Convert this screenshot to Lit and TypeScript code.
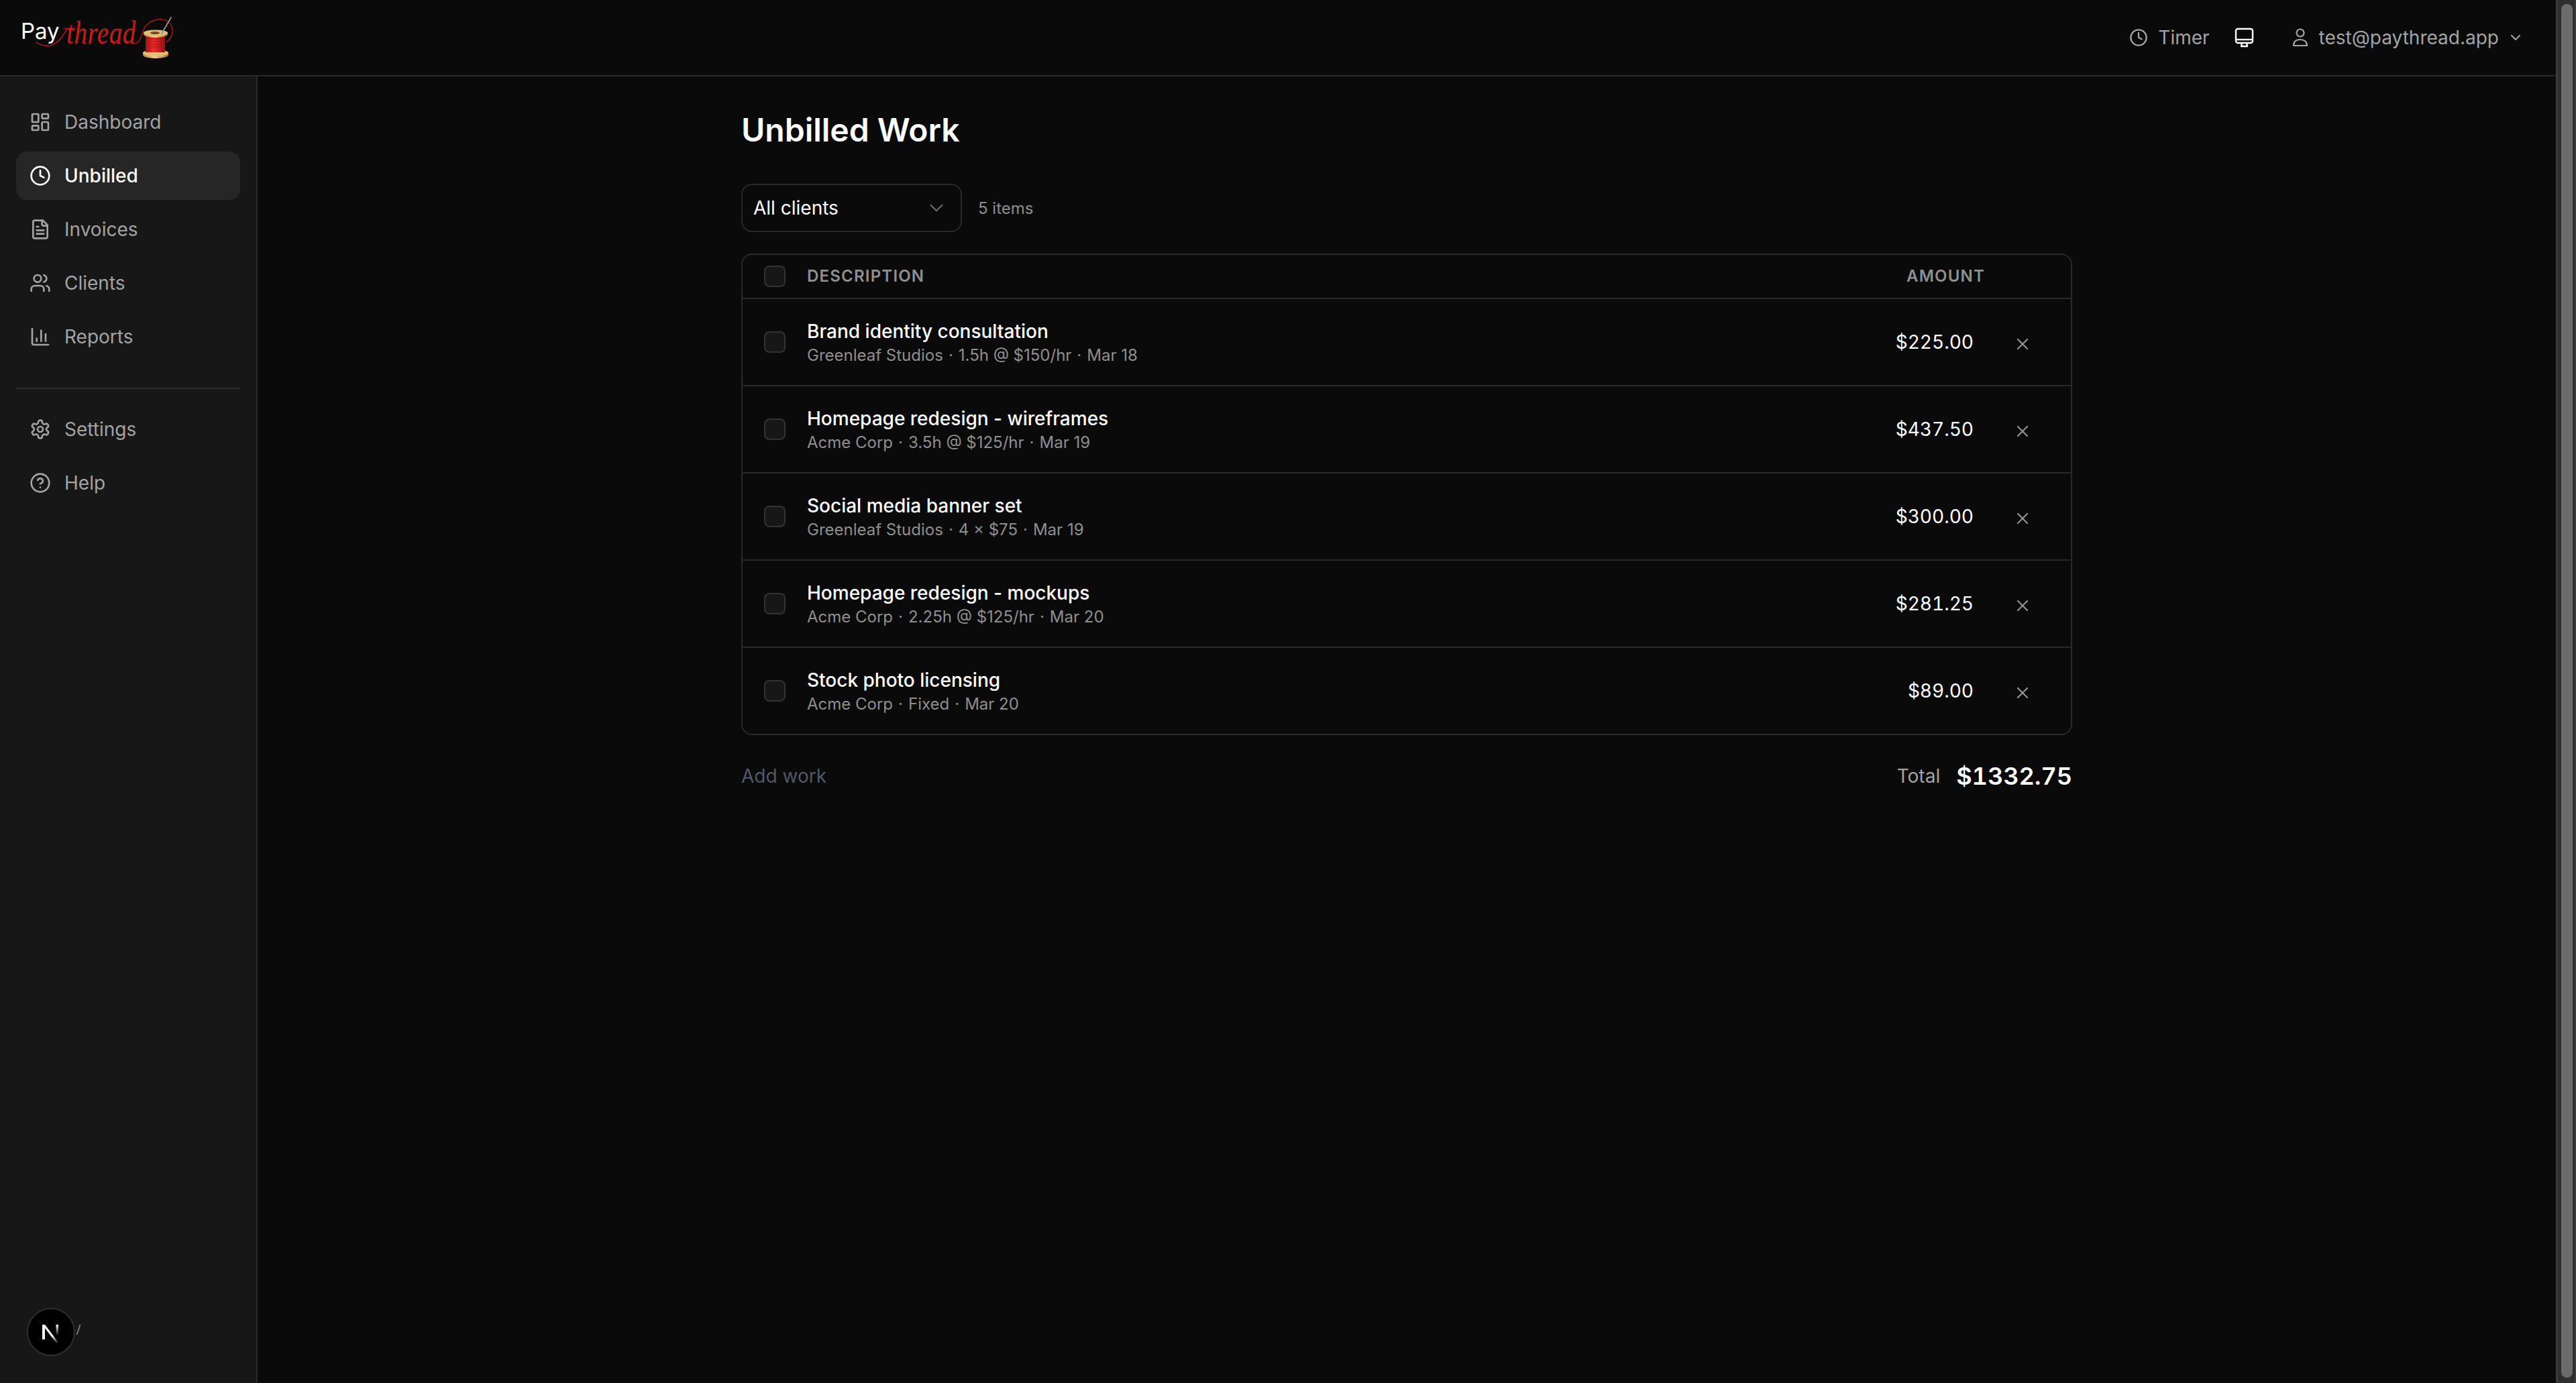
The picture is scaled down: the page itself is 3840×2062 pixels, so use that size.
import { LitElement, html, css, svg } from "lit";
import { customElement } from "lit/decorators.js";

const ic = (body: unknown, cls = "ic") => html`<svg class=${cls} viewBox="0 0 24 24" fill="none" stroke="currentColor" stroke-width="2" stroke-linecap="round" stroke-linejoin="round">${body}</svg>`;

const icons = {
  dashboard: svg`<rect width="7" height="9" x="3" y="3" rx="1"/><rect width="7" height="5" x="14" y="3" rx="1"/><rect width="7" height="9" x="14" y="12" rx="1"/><rect width="7" height="5" x="3" y="16" rx="1"/>`,
  clock: svg`<circle cx="12" cy="12" r="10"/><polyline points="12 6 12 12 16 14"/>`,
  file: svg`<path d="M15 2H6a2 2 0 0 0-2 2v16a2 2 0 0 0 2 2h12a2 2 0 0 0 2-2V7Z"/><path d="M14 2v4a2 2 0 0 0 2 2h4"/><path d="M10 9H8"/><path d="M16 13H8"/><path d="M16 17H8"/>`,
  users: svg`<path d="M16 21v-2a4 4 0 0 0-4-4H6a4 4 0 0 0-4 4v2"/><circle cx="9" cy="7" r="4"/><path d="M22 21v-2a4 4 0 0 0-3-3.87"/><path d="M16 3.13a4 4 0 0 1 0 7.75"/>`,
  chart: svg`<path d="M3 3v16a2 2 0 0 0 2 2h16"/><path d="M18 17V9"/><path d="M13 17V5"/><path d="M8 17v-3"/>`,
  settings: svg`<path d="M12.22 2h-.44a2 2 0 0 0-2 2v.18a2 2 0 0 1-1 1.73l-.43.25a2 2 0 0 1-2 0l-.15-.08a2 2 0 0 0-2.73.73l-.22.38a2 2 0 0 0 .73 2.73l.15.1a2 2 0 0 1 1 1.72v.51a2 2 0 0 1-1 1.74l-.15.09a2 2 0 0 0-.73 2.73l.22.38a2 2 0 0 0 2.73.73l.15-.08a2 2 0 0 1 2 0l.43.25a2 2 0 0 1 1 1.73V20a2 2 0 0 0 2 2h.44a2 2 0 0 0 2-2v-.18a2 2 0 0 1 1-1.73l.43-.25a2 2 0 0 1 2 0l.15.08a2 2 0 0 0 2.73-.73l.22-.39a2 2 0 0 0-.73-2.73l-.15-.08a2 2 0 0 1-1-1.74v-.5a2 2 0 0 1 1-1.74l.15-.09a2 2 0 0 0 .73-2.73l-.22-.38a2 2 0 0 0-2.73-.73l-.15.08a2 2 0 0 1-2 0l-.43-.25a2 2 0 0 1-1-1.73V4a2 2 0 0 0-2-2z"/><circle cx="12" cy="12" r="3"/>`,
  help: svg`<circle cx="12" cy="12" r="10"/><path d="M9.09 9a3 3 0 0 1 5.83 1c0 2-3 3-3 3"/><path d="M12 17h.01"/>`,
  x: svg`<path d="M18 6 6 18"/><path d="m6 6 12 12"/>`,
  chevron: svg`<path d="m6 9 6 6 6-6"/>`,
};

const nav = [
  { label: "Dashboard", icon: icons.dashboard },
  { label: "Unbilled", icon: icons.clock, active: true },
  { label: "Invoices", icon: icons.file },
  { label: "Clients", icon: icons.users },
  { label: "Reports", icon: icons.chart },
];
const nav2 = [
  { label: "Settings", icon: icons.settings },
  { label: "Help", icon: icons.help },
];
const rows: [string, string[], string][] = [
  ["Brand identity consultation", ["Greenleaf Studios", "1.5h @ $150/hr", "Mar 18"], "$225.00"],
  ["Homepage redesign - wireframes", ["Acme Corp", "3.5h @ $125/hr", "Mar 19"], "$437.50"],
  ["Social media banner set", ["Greenleaf Studios", "4 × $75", "Mar 19"], "$300.00"],
  ["Homepage redesign - mockups", ["Acme Corp", "2.25h @ $125/hr", "Mar 20"], "$281.25"],
  ["Stock photo licensing", ["Acme Corp", "Fixed", "Mar 20"], "$89.00"],
];

const logo = html`<svg class="logo" viewBox="0 0 264 100" width="264" height="100">
  <defs>
    <linearGradient id="wood" x1="0" x2="1" y1="0" y2="0">
      <stop offset="0" stop-color="#b98338"/><stop offset=".45" stop-color="#f3d08e"/><stop offset="1" stop-color="#a8742f"/>
    </linearGradient>
    <linearGradient id="spool" x1="0" x2="1" y1="0" y2="0">
      <stop offset="0" stop-color="#a81212"/><stop offset=".4" stop-color="#ec2b2b"/><stop offset="1" stop-color="#9c0f0f"/>
    </linearGradient>
  </defs>
  <text x="31" y="58" class="pay">Pay</text>
  <g transform="translate(99 65) scale(1 1.25)"><text x="0" y="0" class="thread">thread</text></g>
  <path d="M53 63 C62 68 72 70 80 66 C90 61 94 52 100 43" fill="none" stroke="#d01818" stroke-width="1.3"/>
  <path d="M94 43 L113 42" fill="none" stroke="#d01818" stroke-width="1.2"/>
  <path d="M200 65 C208 66 211 52 214 44 C219 33 232 27 243 29 C258 32 263 50 248 63" fill="none" stroke="#c81616" stroke-width="1.2"/>
  <rect x="217" y="54" width="29" height="24" fill="url(#spool)"/>
  <g stroke="#8a0e0e" stroke-width=".7" opacity=".7">
    <path d="M217 58h29M217 62h29M217 66h29M217 70h29M217 74h29"/>
  </g>
  <path d="M213 79a19 5 0 0 1 38 0v3a19 5 0 0 1-38 0z" fill="url(#wood)"/>
  <ellipse cx="232" cy="79" rx="19" ry="4.5" fill="#e6bd77"/>
  <rect x="217" y="72" width="29" height="6" fill="url(#spool)"/>
  <path d="M214 49v2a18 5 0 0 0 36 0v-2z" fill="url(#wood)"/>
  <ellipse cx="232" cy="49" rx="18" ry="4.5" fill="#e6bd77"/>
  <ellipse cx="231" cy="49" rx="7" ry="2" fill="#6e4a1e"/>
  <path d="M241 50 L255 26" stroke="#8d8d8d" stroke-width="2" stroke-linecap="round"/>
</svg>`;

@customElement("app-root")
export class AppRoot extends LitElement {
  static styles = css`
    :host { display: block; width: 3840px; height: 2062px; overflow: hidden; background: #0a0a0a; color: #fff; font-family: Inter, "Liberation Sans", sans-serif; position: relative; }
    .page { display: flex; height: 2062px; }
    .scrollbar { width: 30px; flex: none; box-sizing: border-box; background: #2e2e2e; border-left: 3px solid #3c3c3c; border-right: 2px solid #3c3c3c; padding: 6px 3px 8px 5px; }
    .thumb { height: 100%; border-radius: 8px; background: #6b6b6b; }
    .frame { flex: 1; min-width: 0; display: flex; flex-direction: column; }
    header { height: 114px; box-sizing: border-box; flex: none; display: flex; align-items: center; border-bottom: 2px solid #292929; background: #0a0a0a; }
    .logo { display: block; flex: none; align-self: flex-start; }
    .pay { font-family: Inter, sans-serif; font-size: 33px; fill: #fff; font-weight: 400; }
    .thread { font-family: "Liberation Serif", serif; font-style: italic; font-size: 39px; fill: #d01818; letter-spacing: 0.6px; }
    .hright { margin-left: auto; display: flex; align-items: center; color: #a3a3a3; font-size: 28px; padding-right: 48px; }
    .hitem { display: flex; align-items: center; }
    .timer { gap: 15px; margin-right: 37px; }
    .timer .ic { width: 28px; height: 28px; }
    .mon { color: #fff; margin-right: 53px; display: flex; }
    .mon svg { width: 30px; height: 30px; display: block; }
    .user { gap: 13px; }
    .user svg.u { width: 30px; height: 30px; }
    .user .chev { width: 24px; height: 24px; }
    .ic { width: 32px; height: 32px; flex: none; display: block; }
    .body { flex: 1; display: flex; min-height: 0; }
    aside { width: 384px; flex: none; box-sizing: border-box; background: #171717; border-right: 2px solid #2a2a2a; padding: 32px 24px; }
    .nav { display: flex; flex-direction: column; gap: 8px; }
    .item { height: 72px; border-radius: 16px; box-sizing: border-box; padding-left: 20px; display: flex; align-items: center; gap: 20px; font-size: 28px; color: #a3a3a3; }
    .item.active { background: #262626; color: #fff; font-weight: 500; }
    .sep { height: 2px; background: #2e2e2e; margin: 40px 0 24px; }
    main { flex: 1; min-width: 0; display: flex; justify-content: center; background: #0a0a0a; }
    .content { width: 1984px; padding-top: 48px; }
    h1 { margin: 0 0 48px; font-size: 48px; line-height: 64px; font-weight: 600; letter-spacing: 0; }
    .filters { display: flex; align-items: center; gap: 24px; margin-bottom: 32px; }
    .select { width: 329px; height: 72px; box-sizing: border-box; border: 2px solid #292929; border-radius: 16px; background: #0a0a0a; display: flex; align-items: center; justify-content: space-between; padding: 0 19px 0 16px; font-size: 28px; color: #fff; }
    .select .ic { width: 34px; height: 34px; color: #6b7280; stroke-width: 1.3; }
    .count { font-size: 24px; color: #a3a3a3; opacity: .85; }
    .table { border: 2px solid #292929; border-radius: 16px; overflow: hidden; }
    .row, .thead { display: flex; align-items: center; padding-left: 32px; box-sizing: border-box; }
    .thead { height: 66px; border-bottom: 2px solid #292929; }
    .row { height: 128px; }
    .row + .row { height: 130px; border-top: 2px solid #292929; }
    .cb { width: 32px; height: 32px; flex: none; box-sizing: border-box; border-radius: 8px; border: 2px solid #333; background: #171717; margin-right: 32px; }
    .th { font-size: 24px; font-weight: 600; color: #8f8f8f; letter-spacing: 0.05em; line-height: 32px; }
    .grow { flex: 1; min-width: 0; }
    .hact { width: 128px; flex: none; }
    .title { font-size: 28px; line-height: 40px; font-weight: 500; color: #fff; }
    .sub { font-size: 24px; line-height: 32px; color: #8f8f8f; }
    .dot { margin: 0 1.25px; }
    .amount { font-size: 28px; font-weight: 400; color: #fff; font-variant-numeric: tabular-nums; }
    .act { width: 145px; flex: none; display: flex; justify-content: center; padding-top: 5px; box-sizing: border-box; color: #8f8f8f; }
    .act .ic { width: 28px; height: 28px; }
    .footer { display: flex; align-items: center; justify-content: space-between; margin-top: 40px; height: 42px; }
    .add { font-size: 28px; color: #4f5967; }
    .total { display: flex; align-items: center; gap: 24px; }
    .total .l { font-size: 28px; color: #a3a3a3; }
    .total .v { font-size: 36px; font-weight: 600; color: #fff; font-variant-numeric: tabular-nums; }
    .badge { position: absolute; left: 40px; top: 1950px; width: 72px; height: 72px; box-sizing: border-box; border-radius: 50%; background: #000; border: 2px solid #2e2e2e; display: flex; align-items: center; justify-content: center; }
    .badge svg { width: 36px; height: 36px; display: block; }
    .slash { position: absolute; left: 110px; top: 1972px; width: 14px; height: 20px; }
  `;

  render() {
    return html`<div class="page">
      <div class="frame">
        <header>
          ${logo}
          <div class="hright">
            <div class="hitem timer">${ic(icons.clock)}<span>Timer</span></div>
            <div class="mon"><svg viewBox="0 0 30 30" fill="none" stroke="currentColor" stroke-width="2.4" stroke-linejoin="round"><rect x="2" y="2" width="25" height="21" rx="3"/><path d="M2 18h25"/><path d="M11 23l-1 5h9l-1-5"/></svg></div>
            <div class="hitem user">
              <svg class="u" viewBox="0 0 30 30" fill="none" stroke="currentColor" stroke-width="2.2" stroke-linejoin="round"><circle cx="15" cy="8" r="5.5"/><path d="M5 27c0-6 4-9 10-9s10 3 10 9z"/></svg>
              <span>test@paythread.app</span>
              ${ic(icons.chevron, "ic chev")}
            </div>
          </div>
        </header>
        <div class="body">
          <aside>
            <div class="nav">${nav.map((n) => html`<div class="item ${n.active ? "active" : ""}">${ic(n.icon)}<span>${n.label}</span></div>`)}</div>
            <div class="sep"></div>
            <div class="nav">${nav2.map((n) => html`<div class="item">${ic(n.icon)}<span>${n.label}</span></div>`)}</div>
          </aside>
          <main>
            <div class="content">
              <h1>Unbilled Work</h1>
              <div class="filters">
                <div class="select"><span>All clients</span>${ic(icons.chevron)}</div>
                <span class="count">5 items</span>
              </div>
              <div class="table">
                <div class="thead">
                  <div class="cb"></div>
                  <div class="th grow">DESCRIPTION</div>
                  <div class="th">AMOUNT</div>
                  <div class="hact"></div>
                </div>
                ${rows.map((r) => html`<div class="row">
                  <div class="cb"></div>
                  <div class="grow"><div class="title">${r[0]}</div><div class="sub">${r[1][0]} <span class="dot">·</span> ${r[1][1]} <span class="dot">·</span> ${r[1][2]}</div></div>
                  <div class="amount">${r[2]}</div>
                  <div class="act">${ic(icons.x)}</div>
                </div>`)}
              </div>
              <div class="footer">
                <span class="add">Add work</span>
                <div class="total"><span class="l">Total</span><span class="v">$1332.75</span></div>
              </div>
            </div>
          </main>
        </div>
      </div>
      <div class="scrollbar"><div class="thumb"></div></div>
    </div>
    <svg class="slash" viewBox="0 0 14 20"><path d="M9.5 3 L4.5 18" stroke="#777" stroke-width="2"/></svg>
    <div class="badge">
      <svg viewBox="0 0 36 36">
        <defs>
          <linearGradient id="nf1" gradientUnits="userSpaceOnUse" x1="5" y1="7" x2="29" y2="35"><stop offset=".6" stop-color="#fff"/><stop offset="1" stop-color="#fff" stop-opacity="0"/></linearGradient>
          <linearGradient id="nf2" x1="0" y1="0" x2="0" y2="1"><stop offset="0" stop-color="#fff"/><stop offset="1" stop-color="#fff" stop-opacity="0"/></linearGradient>
        </defs>
        <path d="M5 7h4v22H5z" fill="#fff"/>
        <path d="M5 7h4L29 33.5l-2.6 1.6z" fill="url(#nf1)"/>
        <rect x="25.5" y="7" width="3.5" height="16" fill="url(#nf2)"/>
      </svg>
    </div>`;
  }
}
